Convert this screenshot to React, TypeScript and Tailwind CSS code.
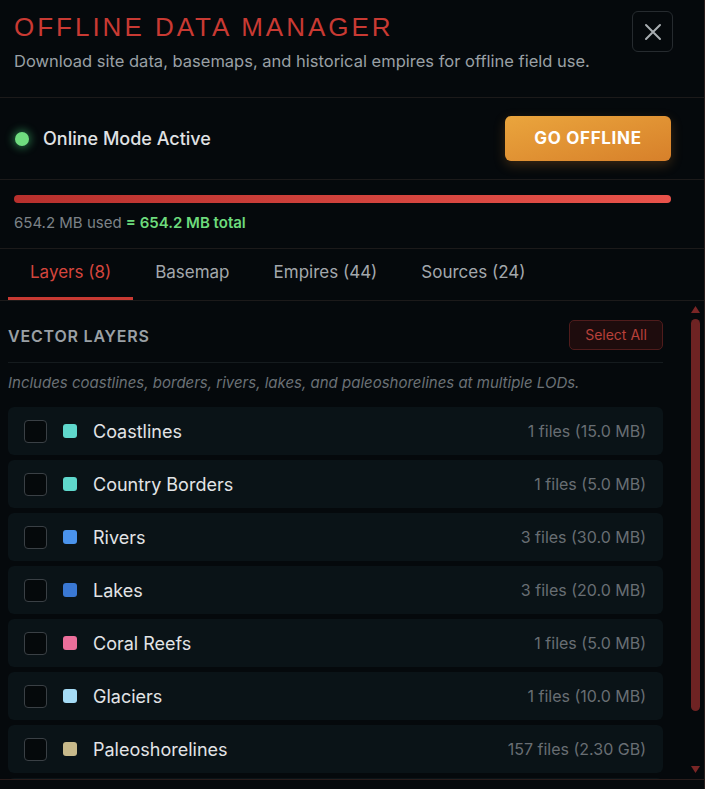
import { useState } from 'react';

type Layer = {
  name: string;
  color: string;
  info: string;
};

const layers: Layer[] = [
  { name: 'Coastlines', color: 'bg-[#5fd8cc]', info: '1 files (15.0 MB)' },
  { name: 'Country Borders', color: 'bg-[#5fd8cc]', info: '1 files (5.0 MB)' },
  { name: 'Rivers', color: 'bg-[#4a93ec]', info: '3 files (30.0 MB)' },
  { name: 'Lakes', color: 'bg-[#3a78d4]', info: '3 files (20.0 MB)' },
  { name: 'Coral Reefs', color: 'bg-[#ec6f9b]', info: '1 files (5.0 MB)' },
  { name: 'Glaciers', color: 'bg-[#a5dcf6]', info: '1 files (10.0 MB)' },
  { name: 'Paleoshorelines', color: 'bg-[#c7b98a]', info: '157 files (2.30 GB)' },
  { name: 'Ice Sheets (LGM)', color: 'bg-[#dfeef7]', info: '4 files (40.0 MB)' },
];

const tabs = ['Layers (8)', 'Basemap', 'Empires (44)', 'Sources (24)'];

const LayerRow = ({ layer, checked, onToggle }: { layer: Layer; checked: boolean; onToggle: () => void }) => (
  <div className="flex h-12 shrink-0 items-center rounded-md bg-[#0a1317] pl-4 pr-[17px]">
    <button
      type="button"
      onClick={onToggle}
      aria-label={layer.name}
      className={`h-[23px] w-[23px] shrink-0 rounded-[4px] border ${checked ? 'border-[#d9443c] bg-[#d9443c]' : 'border-[#3a4045] bg-[#05090b]'}`}
    />
    <span className={`ml-4 h-[14px] w-[14px] shrink-0 rounded-[3px] ${layer.color}`} />
    <span className="ml-4 text-[18px] text-[#e2e4e6]">{layer.name}</span>
    <span className="ml-auto text-[16px] text-[#686e73]">{layer.info}</span>
  </div>
);

const ScrollTrack = () => (
  <div className="flex w-[14px] shrink-0 flex-col items-center pb-[6px] pt-[5px]">
    <svg width="9" height="7" viewBox="0 0 9 7" className="fill-[#7a2626]">
      <path d="M4.5 0L9 7H0z" />
    </svg>
    <div className="mt-[6px] h-[392px] w-[9px] rounded-full bg-[#6e2323]" />
    <div className="flex-1" />
    <svg width="9" height="7" viewBox="0 0 9 7" className="fill-[#7a2626]">
      <path d="M0 0h9L4.5 7z" />
    </svg>
  </div>
);

export default function App() {
  const [active, setActive] = useState(0);
  const [checked, setChecked] = useState<boolean[]>(layers.map(() => false));

  return (
    <div className="flex h-[789px] w-full flex-col overflow-hidden border-r border-[#2a1d1c] bg-[#05090c] font-['Inter',sans-serif]">
      <header className="flex items-start justify-between border-b border-[#1c1a1a] px-[14px] pb-[26px] pt-[9px]">
        <div>
          <h1 className="mt-[2px] font-['Liberation_Sans',sans-serif] text-[26px] uppercase leading-[32px] tracking-[0.115em] text-[#c93a33]">
            Offline Data Manager
          </h1>
          <p className="mt-[8px] text-[16.5px] leading-5 text-[#9aa0a5]">
            Download site data, basemaps, and historical empires for offline field use.
          </p>
        </div>
        <button
          type="button"
          aria-label="Close"
          className="mr-[17px] mt-[2px] flex h-[41px] w-[41px] items-center justify-center rounded-md border border-[#262b2f] text-[#a8adb1]"
        >
          <svg width="20" height="20" viewBox="0 0 20 20" fill="none" stroke="currentColor" strokeWidth="2" strokeLinecap="round">
            <path d="M3 3l14 14M17 3L3 17" />
          </svg>
        </button>
      </header>

      <section className="flex h-[82px] items-center justify-between border-b border-[#1c1a1a] pl-[14px] pr-[33px]">
        <div className="flex items-center gap-[14px]">
          <span className="ml-[1px] h-[14px] w-[14px] rounded-full bg-[#6fdc7f] shadow-[0_0_8px_2px_rgba(74,222,128,0.45)]" />
          <span className="text-[18px] font-medium text-[#e0e2e4]">Online Mode Active</span>
        </div>
        <button
          type="button"
          className="h-[45px] w-[166px] rounded-md bg-gradient-to-br from-[#eaa53d] to-[#d7802a] text-[17px] font-bold tracking-[0.04em] text-white shadow-[0_4px_12px_rgba(217,130,40,0.25)]"
        >
          GO OFFLINE
        </button>
      </section>

      <section className="border-b border-[#1c1a1a] px-[14px] pb-[13px] pt-[15px]">
        <div className="mr-[19px] h-2 rounded-full bg-gradient-to-r from-[#b8302d] to-[#e9534b]" />
        <p className="mt-[9px] text-[15px] text-[#7c8287]">
          654.2 MB used <span className="font-semibold text-[#6ddb7c]">= 654.2 MB total</span>
        </p>
      </section>

      <nav className="flex border-b border-[#1c1a1a] px-2">
        {tabs.map((tab, i) => (
          <button
            key={tab}
            type="button"
            onClick={() => setActive(i)}
            className={`h-[51px] border-b-[3px] px-[22px] pt-[1px] text-[17px] ${
              active === i ? 'border-[#c93a33] text-[#d4453d]' : 'border-transparent text-[#a3a8ac]'
            }`}
          >
            {tab}
          </button>
        ))}
      </nav>

      <div className="flex min-h-0 flex-1">
        <div className="min-w-0 flex-1 overflow-hidden pl-2 pr-[25px] pt-[19px]">
          <div className="flex items-center justify-between border-b border-[#151b1e] pb-[12px]">
            <h2 className="pt-[2px] text-[16px] font-semibold tracking-[0.05em] text-[#9aa0a5]">VECTOR LAYERS</h2>
            <button
              type="button"
              onClick={() => setChecked(layers.map(() => true))}
              className="h-[30px] w-[94px] rounded-[5px] border border-[#4f1c1c] bg-[#1e0c0d] text-[14px] text-[#b8403a]"
            >
              Select All
            </button>
          </div>
          <p className="mt-[9px] text-[15px] italic text-[#6b7176]">
            Includes coastlines, borders, rivers, lakes, and paleoshorelines at multiple LODs.
          </p>
          <div className="mt-[13px] flex flex-col gap-[5px]">
            {layers.map((layer, i) => (
              <LayerRow
                key={layer.name}
                layer={layer}
                checked={checked[i]}
                onToggle={() => setChecked((prev) => prev.map((v, j) => (j === i ? !v : v)))}
              />
            ))}
          </div>
        </div>
        <ScrollTrack />
        <div className="w-[2px] shrink-0" />
      </div>

      <footer className="h-[10px] shrink-0 border-t border-[#2a1d1c] bg-[#05090c]" />
    </div>
  );
}
